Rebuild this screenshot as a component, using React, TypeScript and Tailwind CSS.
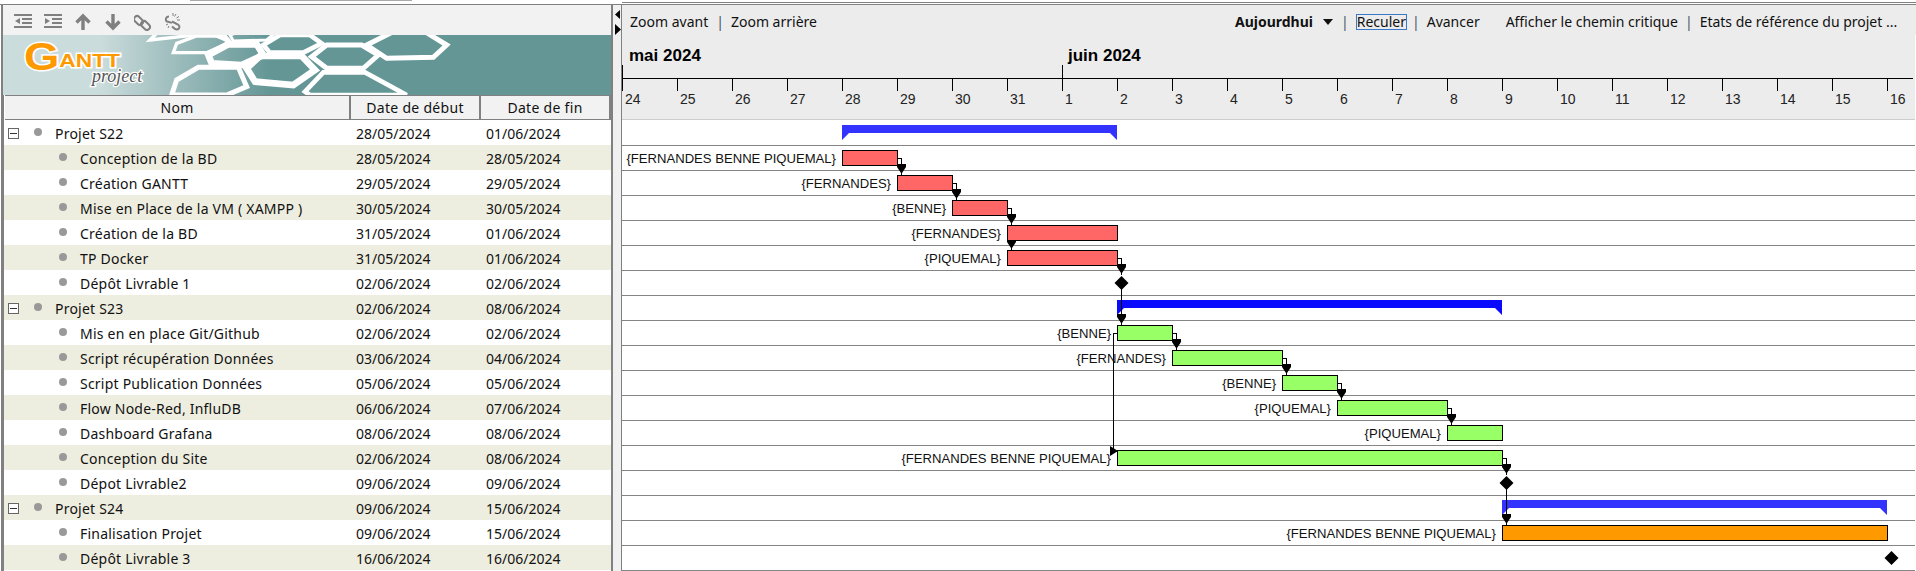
const rows = [
  { name: 'Projet S22', start: '28/05/2024', end: '01/06/2024', group: true },
  { name: 'Conception de la BD', start: '28/05/2024', end: '28/05/2024' },
  { name: 'Création GANTT', start: '29/05/2024', end: '29/05/2024' },
  { name: 'Mise en Place de la VM ( XAMPP )', start: '30/05/2024', end: '30/05/2024' },
  { name: 'Création de la BD', start: '31/05/2024', end: '01/06/2024' },
  { name: 'TP Docker', start: '31/05/2024', end: '01/06/2024' },
  { name: 'Dépôt Livrable 1', start: '02/06/2024', end: '02/06/2024' },
  { name: 'Projet S23', start: '02/06/2024', end: '08/06/2024', group: true },
  { name: 'Mis en en place Git/Github', start: '02/06/2024', end: '02/06/2024' },
  { name: 'Script récupération Données', start: '03/06/2024', end: '04/06/2024' },
  { name: 'Script Publication Données', start: '05/06/2024', end: '05/06/2024' },
  { name: 'Flow Node-Red, InfluDB', start: '06/06/2024', end: '07/06/2024' },
  { name: 'Dashboard Grafana', start: '08/06/2024', end: '08/06/2024' },
  { name: 'Conception du Site', start: '02/06/2024', end: '08/06/2024' },
  { name: 'Dépot Livrable2', start: '09/06/2024', end: '09/06/2024' },
  { name: 'Projet S24', start: '09/06/2024', end: '15/06/2024', group: true },
  { name: 'Finalisation Projet', start: '09/06/2024', end: '15/06/2024' },
  { name: 'Dépôt Livrable 3', start: '16/06/2024', end: '16/06/2024' },
]

const ALL = '{FERNANDES BENNE PIQUEMAL}'
const RED = '#ff6666'
const GREEN = '#99ff66'
const ORANGE = '#ff9900'

// row, first day, last day (offsets from 24 May), label, colour
const bars = [
  { row: 1, from: 4, to: 5, label: ALL, color: RED },
  { row: 2, from: 5, to: 6, label: '{FERNANDES}', color: RED },
  { row: 3, from: 6, to: 7, label: '{BENNE}', color: RED },
  { row: 4, from: 7, to: 9, label: '{FERNANDES}', color: RED },
  { row: 5, from: 7, to: 9, label: '{PIQUEMAL}', color: RED },
  { row: 8, from: 9, to: 10, label: '{BENNE}', color: GREEN },
  { row: 9, from: 10, to: 12, label: '{FERNANDES}', color: GREEN },
  { row: 10, from: 12, to: 13, label: '{BENNE}', color: GREEN },
  { row: 11, from: 13, to: 15, label: '{PIQUEMAL}', color: GREEN },
  { row: 12, from: 15, to: 16, label: '{PIQUEMAL}', color: GREEN },
  { row: 13, from: 9, to: 16, label: ALL, color: GREEN },
  { row: 16, from: 16, to: 23, label: ALL, color: ORANGE },
]

const summaries = [
  { row: 0, from: 4, to: 9, color: '#3333ff' },
  { row: 7, from: 9, to: 16, color: '#0a0aff' },
  { row: 15, from: 16, to: 23, color: '#3333ff' },
]

const milestones = [
  { row: 6, day: 9 },
  { row: 14, day: 16 },
  { row: 17, day: 23 },
]

// bar end to the top of a later row
const links = [
  { row: 1, day: 5, toRow: 2 },
  { row: 2, day: 6, toRow: 3 },
  { row: 3, day: 7, toRow: 4 },
  { row: 3, day: 7, toRow: 5 },
  { row: 5, day: 9, toRow: 6 },
  { row: 8, day: 10, toRow: 9 },
  { row: 9, day: 12, toRow: 10 },
  { row: 10, day: 13, toRow: 11 },
  { row: 11, day: 15, toRow: 12 },
  { row: 13, day: 16, toRow: 14 },
]

const dayLabels = [24, 25, 26, 27, 28, 29, 30, 31, 1, 2, 3, 4, 5, 6, 7, 8, 9, 10, 11, 12, 13, 14, 15, 16]

const dayX = (d: number) => 622 + d * 55
const rowY = (r: number) => 120 + r * 25

function Arrow({ x, tip }: { x: number; tip: number }) {
  return (
    <polygon
      points={`${x - 4},${tip - 9} ${x + 5},${tip - 9} ${x + 5},${tip - 6} ${x + 1},${tip} ${x},${tip} ${x - 4},${tip - 6}`}
      fill="#000"
    />
  )
}

function Chart() {
  return (
    <svg width="1294" height="536" className="block font-['Liberation_Sans',sans-serif]">
      <g transform="translate(-622 -35)">
        <rect x="622" y="35" width="1293" height="84" fill="#ececec" />
        <rect x="622" y="119" width="1293" height="1" fill="#cccccc" />
        <text x="629" y="61" fontSize="17" fontWeight="700" fill="#000">mai 2024</text>
        <text x="1068" y="61" fontSize="17" fontWeight="700" fill="#000">juin 2024</text>
        <rect x="622" y="78" width="1291" height="1" fill="#000" />
        <rect x="622" y="65" width="1" height="26" fill="#000" />
        <rect x="1062" y="65" width="1" height="26" fill="#000" />
        {dayLabels.map((d, i) => (
          <g key={i}>
            <rect x={dayX(i)} y="78" width="1" height="13" fill="#000" />
            <text x={dayX(i) + 3} y="104" fontSize="14" fill="#222">{d}</text>
          </g>
        ))}
        {rows.map((_, i) => (
          <rect key={i} x="622" y={rowY(i) + 25} width="1293" height="1" fill="#858585" />
        ))}
        {summaries.map((s) => {
          const x0 = dayX(s.from)
          const x1 = dayX(s.to)
          const y = rowY(s.row) + 5
          return (
            <polygon
              key={s.row}
              points={`${x0},${y} ${x1},${y} ${x1},${y + 15} ${x1 - 7},${y + 8} ${x0 + 7},${y + 8} ${x0},${y + 15}`}
              fill={s.color}
            />
          )
        })}
        {/* links sit under the bars */}
        <g fill="none" stroke="#000" strokeWidth="1" shapeRendering="crispEdges">
          {links.map((l, i) => (
            <path
              key={i}
              d={`M${dayX(l.day)} ${rowY(l.row) + 13.5}H${dayX(l.day) + 4.5}V${rowY(l.toRow) + 5}`}
            />
          ))}
          <path d={`M1121.5 ${rowY(6) + 13}V${rowY(8) + 5}`} />
          <path d={`M1506.5 ${rowY(14) + 13}V${rowY(16) + 5}`} />
          <path d="M1117 333.500H1113.500V451.500H1117" />
        </g>
        {links.map((l, i) => (
          <Arrow key={i} x={dayX(l.day) + 4} tip={rowY(l.toRow) + 3} />
        ))}
        <Arrow x={1121} tip={323} />
        <Arrow x={1506} tip={523} />
        <polygon points="1110,446 1118,451 1110,456" fill="#000" />
        {bars.map((b) => {
          const x = dayX(b.from)
          return (
            <g key={b.row}>
              <text x={x - 6} y={rowY(b.row) + 18} textAnchor="end" fontSize="13.1" fill="#111">{b.label}</text>
              <rect
                x={x + 0.5}
                y={rowY(b.row) + 5.5}
                width={(b.to - b.from) * 55}
                height="15"
                fill={b.color}
                stroke="#000"
                shapeRendering="crispEdges"
              />
            </g>
          )
        })}
        {milestones.map((m) => {
          const cx = dayX(m.day) + 4.5
          const cy = rowY(m.row) + 13
          return (
            <polygon key={m.row} points={`${cx},${cy - 7} ${cx + 7},${cy} ${cx},${cy + 7} ${cx - 7},${cy}`} fill="#000" />
          )
        })}
      </g>
    </svg>
  )
}

function Toolbar() {
  return (
    <div className="flex h-[30px] shrink-0 items-start bg-[#f2f2f2] pl-[11px] pt-[8px]">
      <svg width="20" height="16" className="mr-[10px]" fill="#808080">
        <rect x="0" y="1" width="18" height="2" />
        <rect x="8" y="5" width="10" height="2" />
        <rect x="8" y="9" width="10" height="2" />
        <rect x="0" y="13" width="18" height="2" />
        <polygon points="1,8 6,5 6,11" />
      </svg>
      <svg width="20" height="16" className="mr-[10px]" fill="#808080">
        <rect x="0" y="1" width="18" height="2" />
        <rect x="8" y="5" width="10" height="2" />
        <rect x="8" y="9" width="10" height="2" />
        <rect x="0" y="13" width="18" height="2" />
        <polygon points="6,8 1,5 1,11" />
      </svg>
      <svg width="20" height="18" className="mr-[10px]" fill="none" stroke="#808080" strokeWidth="3.4">
        <path d="M9 17V3M2.500 9.500L9 3l6.500 6.500" />
      </svg>
      <svg width="20" height="18" className="mr-[10px]" fill="none" stroke="#808080" strokeWidth="3.4">
        <path d="M9 1v14M2.500 8.500L9 15l6.500-6.500" />
      </svg>
      <svg width="20" height="18" className="mr-[10px]" fill="none" stroke="#808080" strokeWidth="2">
        <rect x="-0.5" y="4.5" width="10" height="6" rx="3" transform="rotate(45 4.5 7.5)" />
        <rect x="6.5" y="9.5" width="10" height="6" rx="3" transform="rotate(45 11.5 12.5)" />
      </svg>
      <svg width="20" height="18" fill="none" stroke="#808080" strokeWidth="2">
        <path d="M5 3.500c-3 0-4 3-2.500 4.800l5.500 1.600" />
        <path d="M8 8.500l6 3c2.500 1.600 1.500 5-1 5-1.600 0-3-1-5-3" />
        <path d="M9 0v3M12 1l-1.500 2.500M15 3.500l-2.500 1.500M16 7h-3M2 12l2-1M4 15l1-2" strokeWidth="1" />
      </svg>
    </div>
  )
}

function Banner() {
  return (
    <div className="h-[60px] shrink-0 overflow-hidden bg-[#649696] bg-linear-to-r from-[#cbdcdc] from-[16%] to-[#649696] to-[44%]">
      <svg width="611" height="60" viewBox="-291 15 1833 180" className="block font-['Liberation_Sans',sans-serif]">
        <g fill="none" stroke="#fff" strokeWidth="15" strokeLinejoin="miter">
          <polygon points="150,30 175,5 365,5 390,35 330,10" strokeWidth="10" />
          <polygon points="800,45 880,5 975,5 1040,45 1000,82 860,85" />
          <polygon points="635,80 680,45 785,45 835,75 790,115 680,115" />
          <polygon points="490,45 540,15 630,15 665,40 610,68 510,68" strokeWidth="14" />
          <polygon points="440,115 480,78 605,78 645,120 580,165 465,155" strokeWidth="20" />
          <polygon points="325,75 385,43 470,43 490,75 425,105 335,100" strokeWidth="20" />
          <polygon points="230,150 295,112 415,112 440,170 380,195 215,195" strokeWidth="15" />
          <polygon points="230,40 290,18 365,18 385,38 320,68 220,68" strokeWidth="10" />
          <polygon points="615,185 670,127 795,127 920,195 630,195" strokeWidth="14" />
          <polygon points="390,15 420,5 530,5 500,30 400,33" strokeWidth="9" />
        </g>
        <g transform="translate(-291 15) scale(3)">
          <text
            x="21"
            y="32"
            fontSize="19"
            fontWeight="700"
            fill="#ff9900"
            stroke="#fff"
            strokeWidth="3"
            paintOrder="stroke"
            textLength="96"
            lengthAdjust="spacingAndGlyphs"
          >
            <tspan fontSize="38" dy="3">G</tspan>
            <tspan dy="-3">ANTT</tspan>
          </text>
          <text
            x="89"
            y="47"
            fontSize="18"
            fontStyle="italic"
            fill="#555"
            stroke="#fff"
            strokeWidth="2.500"
            paintOrder="stroke"
            className="font-['Liberation_Serif',serif]"
          >
            project
          </text>
        </g>
      </svg>
    </div>
  )
}

function Table() {
  return (
    <div className="flex-1 border-l border-[#808080] text-[14px] text-[#111]">
      <div className="ml-px flex h-[25px] border-y border-[#808080] bg-[#f2f2f2] tracking-[0.3px]">
        <div className="w-[346px] border-r-2 border-[#808080] pt-px text-center leading-[22px]">Nom</div>
        <div className="w-[130px] border-r-2 border-[#808080] pt-px text-center leading-[22px]">Date de début</div>
        <div className="flex-1 border-r-2 border-[#808080] pt-px text-center leading-[22px]">Date de fin</div>
      </div>
      {rows.map((r, i) => (
        <div key={r.name} className={`flex h-[25px] items-center pt-px ${i % 2 === 1 ? 'bg-[#eeeee0]' : 'bg-white'}`}>
          <div className="flex w-[352px] items-center tracking-[0.22px]">
            {r.group ? (
              <>
                <div className="ml-[4px] flex h-[11px] w-[11px] items-center justify-center border border-[#666] bg-white">
                  <div className="h-px w-[7px] bg-[#333]" />
                </div>
                <div className="ml-[15px] h-[8px] w-[8px] -translate-y-[1px] rounded-full bg-[#999]" />
                <div className="ml-[13px]">{r.name}</div>
              </>
            ) : (
              <>
                <div className="ml-[55px] h-[8px] w-[8px] -translate-y-[1px] rounded-full bg-[#999]" />
                <div className="ml-[13px]">{r.name}</div>
              </>
            )}
          </div>
          <div className="w-[130px]">{r.start}</div>
          <div>{r.end}</div>
        </div>
      ))}
    </div>
  )
}

function ChartToolbar() {
  return (
    <div className="flex h-[30px] shrink-0 items-center bg-[#ececec] pt-[3px] text-[14px] text-[#111]">
      <span className="ml-[8px]">Zoom avant</span>
      <span className="ml-[8px] text-[#456]">|</span>
      <span className="ml-[7px]">Zoom arrière</span>
      <span className="ml-[418px] font-bold">Aujourdhui</span>
      <div className="ml-[10px] h-0 w-0 border-x-[5px] border-t-[6px] border-x-transparent border-t-[#111]" />
      <span className="ml-[8px] text-[#456]">|</span>
      <span className="ml-[7px] border border-[#3a78c8] leading-[14px]">Reculer</span>
      <span className="ml-[5px] text-[#456]">|</span>
      <span className="ml-[7px]">Avancer</span>
      <span className="ml-[26px]">Afficher le chemin critique</span>
      <span className="ml-[7px] text-[#456]">|</span>
      <span className="ml-[7px]">Etats de référence du projet ...</span>
    </div>
  )
}

export default function App() {
  return (
    <div className="flex h-[571px] w-[1916px] flex-col overflow-hidden bg-white font-['Noto_Sans',sans-serif]">
      <div className="flex h-[5px] shrink-0 flex-col">
        <div className="ml-[190px] h-px w-[222px] bg-[#aaaaaa]" />
        <div className="ml-[622px] mt-px h-px flex-none bg-[#808080]" />
        <div className="mt-px h-px bg-[#808080]" />
      </div>
      <div className="flex min-h-0 flex-1">
        <div className="ml-[1px] flex w-[612px] flex-col border-x-2 border-[#808080]">
          <Toolbar />
          <Banner />
          <Table />
        </div>
        <div className="flex w-[8px] flex-col bg-[#f0f0f0] pl-[2px] pt-[5px]">
          <svg width="6" height="30">
            <polygon points="5,0 5,9 0,4.500" fill="#000" />
            <polygon points="0,14 0,25 6,19.500" fill="#000" />
          </svg>
        </div>
        <div className="flex min-w-0 flex-1 flex-col border-l border-[#808080]">
          <ChartToolbar />
          <Chart />
        </div>
      </div>
    </div>
  )
}
